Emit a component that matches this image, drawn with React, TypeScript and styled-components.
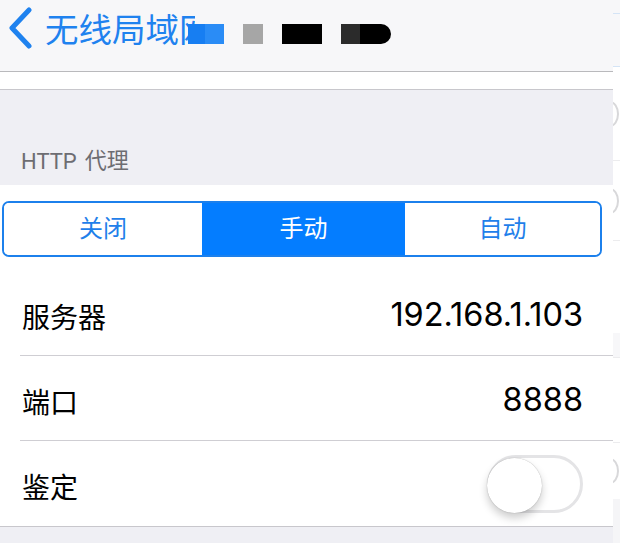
import React from "react";
import styled, { createGlobalStyle } from "styled-components";

const Global = createGlobalStyle`
  html, body { margin: 0; padding: 0; background: #ffffff; }
  body { width: 620px; height: 543px; overflow: hidden; font-family: "Noto Sans CJK SC", "Noto Sans", sans-serif; }
  * { box-sizing: border-box; }
`;

const Page = styled.div`
  display: flex;
  width: 620px;
  height: 543px;
  overflow: hidden;
`;

const Main = styled.div`
  width: 613px;
  display: flex;
  flex-direction: column;
  background: #efeff4;
`;

const Sliver = styled.div`
  flex: 1;
  background: #ffffff;
  display: flex;
  flex-direction: column;
  overflow: hidden;
`;

const SliverBand = styled.div<{ $h: number; $line?: string; $bg?: string }>`
  height: ${(p) => p.$h}px;
  background: ${(p) => p.$bg || "#ffffff"};
  border-bottom: 1px solid ${(p) => p.$line || "transparent"};
  flex-shrink: 0;
  display: flex;
  align-items: center;
`;

const GhostArc = styled.div`
  width: 18px;
  height: 26px;
  margin-left: -12px;
  border: 2px solid #d8d8da;
  border-radius: 50%;
`;

const NavBar = styled.div`
  height: 72px;
  background: #f7f7f9;
  border-bottom: 1px solid #b9b9bc;
  display: flex;
  align-items: center;
  padding: 0 0 15px 7px;
  position: relative;
  flex-shrink: 0;
`;

const BackButton = styled.div`
  display: flex;
  align-items: center;
  gap: 12px;
  color: #1f82ef;
  font-size: 33.5px;
  line-height: 1;
`;

const Redact = styled.div<{
  $x: number;
  $w: number;
  $c: string;
  $c2?: string;
  $split?: number;
  $round?: boolean;
  $top?: number;
  $h?: number;
}>`
  position: absolute;
  top: ${(p) => p.$top ?? 24}px;
  left: ${(p) => p.$x}px;
  width: ${(p) => p.$w}px;
  height: ${(p) => p.$h ?? 20}px;
  background: ${(p) =>
    p.$c2 ? `linear-gradient(to right, ${p.$c} 0 ${p.$split}px, ${p.$c2} ${p.$split}px 100%)` : p.$c};
  border-radius: ${(p) => (p.$round ? "0 10px 10px 0" : "0")};
`;

const Spacer = styled.div`
  height: 18px;
  background: #ffffff;
  border-bottom: 1px solid #c8c7cc;
  flex-shrink: 0;
`;

const SectionHeader = styled.div`
  height: 95px;
  display: flex;
  align-items: flex-end;
  padding: 0 0 11px 21px;
  color: #6d6d72;
  font-size: 22px;
  flex-shrink: 0;
`;

const HeaderLatin = styled.span`
  font-family: Roboto, sans-serif;
  font-size: 22px;
  margin-right: 8px;
`;

const Group = styled.div`
  background: #ffffff;
  border-bottom: 1px solid #c8c7cc;
  flex-shrink: 0;
`;

const SegmentWrap = styled.div`
  padding: 16px 11px 14px 2px;
`;

const Segmented = styled.div`
  display: grid;
  grid-template-columns: 198px 203px 1fr;
  height: 56px;
  border: 2px solid #1c80ec;
  border-radius: 7px;
  overflow: hidden;
`;

const Segment = styled.div<{ $active?: boolean }>`
  display: flex;
  align-items: center;
  justify-content: center;
  font-size: 24px;
  background: ${(p) => (p.$active ? "#047dff" : "#ffffff")};
  color: ${(p) => (p.$active ? "#ffffff" : "#1f80ea")};
  padding-bottom: 5px;
`;

const Row = styled.div<{ $last?: boolean }>`
  margin-left: 20px;
  height: 85px;
  display: flex;
  align-items: center;
  justify-content: space-between;
  padding: 0 30px 0 2px;
  border-bottom: ${(p) => (p.$last ? "none" : "1px solid #cfced3")};
`;

const Label = styled.div`
  font-size: 28px;
  color: #000000;
  padding-top: 5px;
`;

const Value = styled.div`
  font-family: Inter, Roboto, sans-serif;
  font-size: 32.5px;
  color: #000000;
  padding-top: 2px;
`;

const Track = styled.div<{ $on?: boolean }>`
  width: 96px;
  height: 58px;
  border-radius: 29px;
  border: 3px solid #e4e4e6;
  background: ${(p) => (p.$on ? "#4cd964" : "#ffffff")};
  display: flex;
  align-items: center;
`;

const Knob = styled.div`
  width: 55px;
  height: 55px;
  border-radius: 50%;
  background: #ffffff;
  margin-left: -3px;
  margin-top: 3px;
  box-shadow: 0 5px 8px rgba(0, 0, 0, 0.2), 0 0 1px rgba(0, 0, 0, 0.35);
`;

const Bottom = styled.div`
  flex: 1;
  background: #efeff4;
`;

const Chevron = () => (
  <svg width="26" height="42" viewBox="0 0 26 42" fill="none">
    <path d="M22 3 L5 21 L22 39" stroke="#1f82ef" strokeWidth="5" strokeLinecap="round" strokeLinejoin="round" />
  </svg>
);

const rows = [
  { label: "服务器", value: "192.168.1.103" },
  { label: "端口", value: "8888" },
];

export default function App() {
  return (
    <Page>
      <Global />
      <Main>
        <NavBar>
          <BackButton>
            <Chevron />
            <span>无线局域网</span>
          </BackButton>
          <Redact $x={195} $w={36} $c="#f7f7f9" $top={8} $h={42} />
          <Redact $x={188} $w={36} $c="#177ef2" $c2="#2a8cf6" $split={17} />
          <Redact $x={243} $w={20} $c="#a6a6a6" />
          <Redact $x={282} $w={40} $c="#000000" />
          <Redact $x={341} $w={50} $c="#2b2b2b" $c2="#000000" $split={19} $round />
        </NavBar>
        <Spacer />
        <SectionHeader>
          <HeaderLatin>HTTP</HeaderLatin>代理
        </SectionHeader>
        <Group>
          <SegmentWrap>
            <Segmented>
              <Segment>关闭</Segment>
              <Segment $active>手动</Segment>
              <Segment>自动</Segment>
            </Segmented>
          </SegmentWrap>
          {rows.map((r) => (
            <Row key={r.label}>
              <Label>{r.label}</Label>
              <Value>{r.value}</Value>
            </Row>
          ))}
          <Row $last>
            <Label>鉴定</Label>
            <Track>
              <Knob />
            </Track>
          </Row>
        </Group>
        <Bottom />
      </Main>
      <Sliver>
        <SliverBand $h={14} $bg="#f7f7f9" $line="#d4e4f6" />
        <SliverBand $h={53} $bg="#f7f7f9" $line="#d4e4f6" />
        <SliverBand $h={94} $line="#ececee">
          <GhostArc />
        </SliverBand>
        <SliverBand $h={80} $line="#ececee">
          <GhostArc />
        </SliverBand>
        <SliverBand $h={92} />
        <SliverBand $h={25} $bg="#f7f7f9" $line="#ececee" />
        <SliverBand $h={85} $line="#ececee" />
        <SliverBand $h={56}>
          <GhostArc />
        </SliverBand>
        <SliverBand $h={45} $bg="#f5f5f7" />
      </Sliver>
    </Page>
  );
}
